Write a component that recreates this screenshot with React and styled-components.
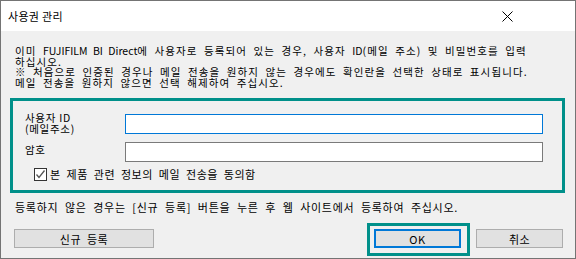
import React from "react";
import styled, { createGlobalStyle } from "styled-components";

const Global = createGlobalStyle`
  html, body { margin: 0; padding: 0; background: #f0f0f0; }
  body { font-family: "Noto Sans CJK KR", "Noto Sans", sans-serif; }
  * { box-sizing: border-box; }
`;

const FONT = `"Noto Sans CJK KR", "Noto Sans", sans-serif`;

const Window = styled.div`
  width: 576px;
  height: 259px;
  border: 1px solid #747474;
  background: #f0f0f0;
  display: flex;
  flex-direction: column;
  font-family: ${FONT};
  font-size: 11px;
  letter-spacing: 0.5px;
  word-spacing: 3px;
  color: #000;
  overflow: hidden;
`;

const TitleBar = styled.div`
  height: 30px;
  flex: none;
  background: #fff;
  display: flex;
  align-items: center;
  justify-content: space-between;
  padding-left: 7px;
  padding-right: 62px;
`;

const Title = styled.span`
  font-size: 11px;
  line-height: 12px;
  letter-spacing: 0.3px;
  word-spacing: 0;
`;

const CloseIcon = styled.svg`
  width: 11px;
  height: 11px;
  display: block;
`;

const Body = styled.div`
  flex: 1;
  display: flex;
  flex-direction: column;
  padding: 15px 12px 0 9px;
`;

const Intro = styled.p`
  margin: 0 0 0 5px;
  font-size: 10.5px;
  line-height: 10.5px;
  letter-spacing: 1.1px;
  white-space: nowrap;
`;

const Latin = styled.span`
  letter-spacing: 0;
`;

const Group = styled.div`
  margin-top: 10px;
  width: 555px;
  height: 95px;
  border: 3px solid #00908a;
  padding: 13px 0 0 12px;
  display: flex;
  flex-direction: column;
`;

const FieldRow = styled.div`
  display: flex;
  align-items: flex-start;
  margin-top: ${(p) => p.$gap || 0}px;
`;

const Label = styled.div`
  width: 100px;
  flex: none;
  font-size: 10.5px;
  line-height: 10.5px;
  letter-spacing: 0.7px;
  word-spacing: 0;
  margin-top: ${(p) => p.$offset || 0}px;
`;

const Input = styled.input`
  width: 418px;
  height: 20px;
  margin: 0;
  padding: 0 3px;
  background: #fff;
  border: 1px solid ${(p) => (p.$focused ? "#0078d7" : "#7a7a7a")};
  outline: none;
  font-family: ${FONT};
  font-size: 11px;
`;

const CheckRow = styled.label`
  display: flex;
  align-items: center;
  gap: 3px;
  margin: 6px 0 0 9px;
  line-height: 13px;
`;

const CheckBox = styled.span`
  width: 13px;
  height: 13px;
  flex: none;
  border: 1px solid #333;
  background: #fff;
  display: flex;
  align-items: center;
  justify-content: center;
`;

const Note = styled.p`
  margin: 9px 0 0 5px;
  line-height: 10px;
  white-space: nowrap;
  word-spacing: 3.5px;
  letter-spacing: 0.7px;
`;

const ButtonRow = styled.div`
  display: flex;
  align-items: center;
  margin-top: 17px;
  padding-left: 4px;
`;

const Button = styled.button`
  width: ${(p) => p.$w || 87}px;
  height: 19px;
  margin: 0;
  padding: 0;
  background: #e1e1e1;
  border: ${(p) => (p.$default ? "2px solid #0078d7" : "1px solid #adadad")};
  font-family: ${FONT};
  font-size: 11px;
  letter-spacing: 0.5px;
  word-spacing: 3px;
  line-height: 12px;
  color: #000;
`;

const Spacer = styled.div`
  flex: 1;
`;

const Highlight = styled.div`
  position: relative;
  margin-right: 15px;
  display: flex;
  &::after {
    content: "";
    position: absolute;
    left: -7px;
    right: -9px;
    top: -6px;
    bottom: -8px;
    border: 3px solid #00908a;
    pointer-events: none;
  }
`;

export default function App() {
  return (
    <>
      <Global />
      <Window>
        <TitleBar>
          <Title>사용권 관리</Title>
          <CloseIcon viewBox="0 0 11 11">
            <path d="M0.5 0.5 L10.5 10.5 M10.5 0.5 L0.5 10.5" stroke="#000" strokeWidth="1" fill="none" />
          </CloseIcon>
        </TitleBar>
        <Body>
          <Intro>
            이미 <Latin>FUJIFILM BI Direct</Latin>에 사용자로 등록되어 있는 경우, 사용자 <Latin>ID</Latin>(메일 주소) 및 비밀번호를 입력
            <br />
            하십시오.
            <br />
            ※ 처음으로 인증된 경우나 메일 전송을 원하지 않는 경우에도 확인란을 선택한 상태로 표시됩니다.
            <br />
            메일 전송을 원하지 않으면 선택 해제하여 주십시오.
          </Intro>
          <Group>
            <FieldRow>
              <Label $offset={-1}>
                사용자 ID
                <br />
                (메일주소)
              </Label>
              <Input $focused defaultValue="" />
            </FieldRow>
            <FieldRow $gap={8}>
              <Label $offset={3}>암호</Label>
              <Input type="password" defaultValue="" />
            </FieldRow>
            <CheckRow>
              <CheckBox>
                <svg width="11" height="11" viewBox="0 0 11 11">
                  <path d="M1.5 5.5 L4 8.5 L9.5 1.5" stroke="#555" strokeWidth="1.3" fill="none" />
                </svg>
              </CheckBox>
              <span>본 제품 관련 정보의 메일 전송을 동의함</span>
            </CheckRow>
          </Group>
          <Note>등록하지 않은 경우는 [신규 등록] 버튼을 누른 후 웹 사이트에서 등록하여 주십시오.</Note>
          <ButtonRow>
            <Button $w={140}>신규 등록</Button>
            <Spacer />
            <Highlight>
              <Button $default>OK</Button>
            </Highlight>
            <Button>취소</Button>
          </ButtonRow>
        </Body>
      </Window>
    </>
  );
}
